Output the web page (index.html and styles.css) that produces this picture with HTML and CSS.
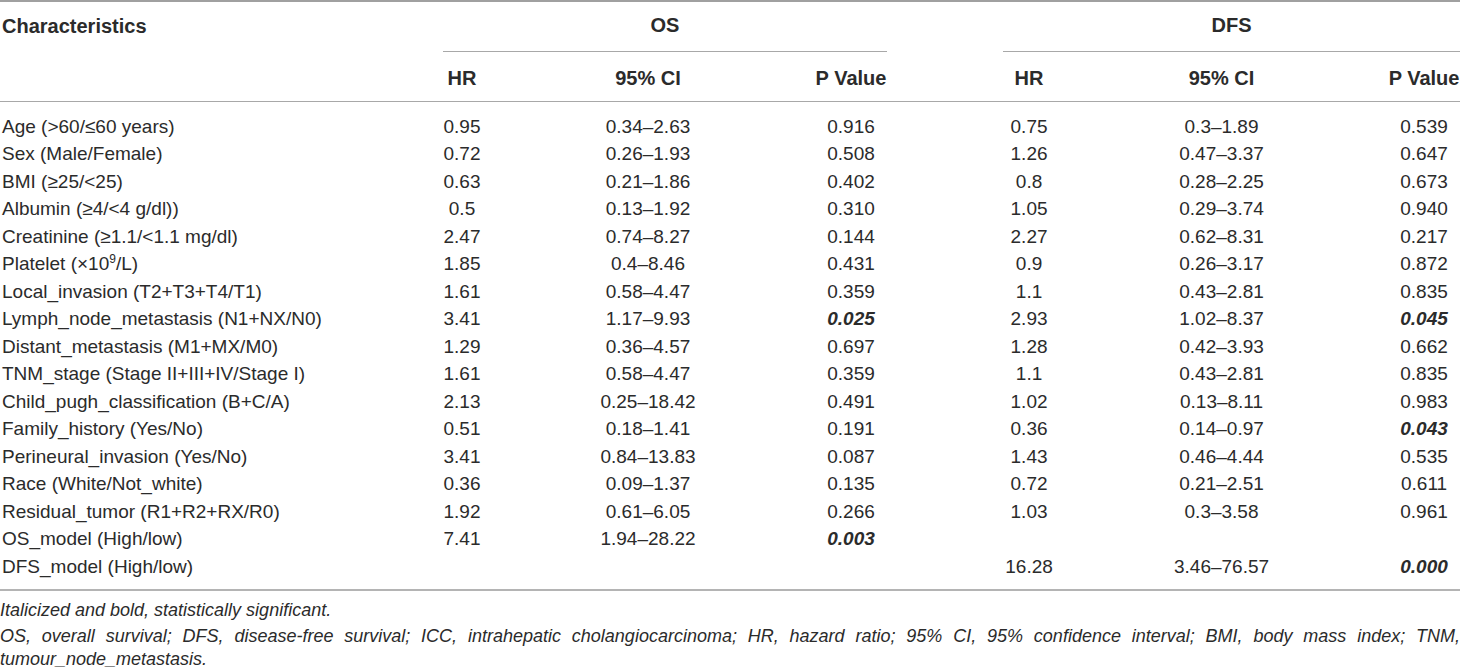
FILE: index.html
```html
<!DOCTYPE html>
<html>
<head>
<meta charset="utf-8">
<link rel="stylesheet" href="styles.css">
</head>
<body>
<table class="tbl">
  <colgroup>
    <col class="c-char"><col class="c-hr1"><col class="c-ci1"><col class="c-p1">
    <col class="c-gap"><col class="c-hr2"><col class="c-ci2"><col class="c-p2">
  </colgroup>
  <thead>
    <tr class="h1">
      <th class="left">Characteristics</th>
      <th colspan="3" class="grp">OS</th>
      <th></th>
      <th colspan="3" class="grp">DFS</th>
    </tr>
    <tr class="h2">
      <th></th>
      <th>HR</th><th>95% CI</th><th>P Value</th>
      <th></th>
      <th>HR</th><th>95% CI</th><th>P Value</th>
    </tr>
  </thead>
  <tbody>
    <tr class="first"><td class="left">Age (&gt;60/≤60 years)</td><td>0.95</td><td>0.34–2.63</td><td>0.916</td><td></td><td>0.75</td><td>0.3–1.89</td><td>0.539</td></tr>
    <tr><td class="left">Sex (Male/Female)</td><td>0.72</td><td>0.26–1.93</td><td>0.508</td><td></td><td>1.26</td><td>0.47–3.37</td><td>0.647</td></tr>
    <tr><td class="left">BMI (≥25/&lt;25)</td><td>0.63</td><td>0.21–1.86</td><td>0.402</td><td></td><td>0.8</td><td>0.28–2.25</td><td>0.673</td></tr>
    <tr><td class="left">Albumin (≥4/&lt;4 g/dl))</td><td>0.5</td><td>0.13–1.92</td><td>0.310</td><td></td><td>1.05</td><td>0.29–3.74</td><td>0.940</td></tr>
    <tr><td class="left">Creatinine (≥1.1/&lt;1.1 mg/dl)</td><td>2.47</td><td>0.74–8.27</td><td>0.144</td><td></td><td>2.27</td><td>0.62–8.31</td><td>0.217</td></tr>
    <tr><td class="left">Platelet (×10<sup>9</sup>/L)</td><td>1.85</td><td>0.4–8.46</td><td>0.431</td><td></td><td>0.9</td><td>0.26–3.17</td><td>0.872</td></tr>
    <tr><td class="left">Local_invasion (T2+T3+T4/T1)</td><td>1.61</td><td>0.58–4.47</td><td>0.359</td><td></td><td>1.1</td><td>0.43–2.81</td><td>0.835</td></tr>
    <tr><td class="left">Lymph_node_metastasis (N1+NX/N0)</td><td>3.41</td><td>1.17–9.93</td><td class="sig">0.025</td><td></td><td>2.93</td><td>1.02–8.37</td><td class="sig">0.045</td></tr>
    <tr><td class="left">Distant_metastasis (M1+MX/M0)</td><td>1.29</td><td>0.36–4.57</td><td>0.697</td><td></td><td>1.28</td><td>0.42–3.93</td><td>0.662</td></tr>
    <tr><td class="left">TNM_stage (Stage II+III+IV/Stage I)</td><td>1.61</td><td>0.58–4.47</td><td>0.359</td><td></td><td>1.1</td><td>0.43–2.81</td><td>0.835</td></tr>
    <tr><td class="left">Child_pugh_classification (B+C/A)</td><td>2.13</td><td>0.25–18.42</td><td>0.491</td><td></td><td>1.02</td><td>0.13–8.11</td><td>0.983</td></tr>
    <tr><td class="left">Family_history (Yes/No)</td><td>0.51</td><td>0.18–1.41</td><td>0.191</td><td></td><td>0.36</td><td>0.14–0.97</td><td class="sig">0.043</td></tr>
    <tr><td class="left">Perineural_invasion (Yes/No)</td><td>3.41</td><td>0.84–13.83</td><td>0.087</td><td></td><td>1.43</td><td>0.46–4.44</td><td>0.535</td></tr>
    <tr><td class="left">Race (White/Not_white)</td><td>0.36</td><td>0.09–1.37</td><td>0.135</td><td></td><td>0.72</td><td>0.21–2.51</td><td>0.611</td></tr>
    <tr><td class="left">Residual_tumor (R1+R2+RX/R0)</td><td>1.92</td><td>0.61–6.05</td><td>0.266</td><td></td><td>1.03</td><td>0.3–3.58</td><td>0.961</td></tr>
    <tr><td class="left">OS_model (High/low)</td><td>7.41</td><td>1.94–28.22</td><td class="sig">0.003</td><td></td><td></td><td></td><td></td></tr>
    <tr class="last"><td class="left">DFS_model (High/low)</td><td></td><td></td><td></td><td></td><td>16.28</td><td>3.46–76.57</td><td class="sig">0.000</td></tr>
  </tbody>
</table>
<div class="notes">
  <p class="note">Italicized and bold, statistically significant.</p>
  <p class="note first-line">OS, overall survival; DFS, disease-free survival; ICC, intrahepatic cholangiocarcinoma; HR, hazard ratio; 95% CI, 95% confidence interval; BMI, body mass index; TNM,</p>
  <p class="note cont">tumour_node_metastasis.</p>
</div>
</body>
</html>
```
FILE: styles.css
```css
html, body {
  margin: 0;
  padding: 0;
  background: #fff;
}
body {
  font-family: "Liberation Sans", Arial, sans-serif;
  color: #2b2b2b;
  width: 1460px;
  overflow: hidden;
}
.tbl {
  width: 1460px;
  border-collapse: collapse;
  table-layout: fixed;
  font-size: 19px;
}
.c-char { width: 443px; }
.c-hr1 { width: 38px; }
.c-ci1 { width: 334px; }
.c-p1 { width: 72px; }
.c-gap { width: 116px; }
.c-hr2 { width: 52px; }
.c-ci2 { width: 333px; }
.c-p2 { width: 72px; }

.tbl th, .tbl td {
  padding: 0;
  text-align: center;
  white-space: nowrap;
  overflow: visible;
}
.tbl .left {
  text-align: left;
  padding-left: 2px;
}
.tbl thead th {
  font-size: 20px;
  font-weight: bold;
  line-height: 24px;
}
.tbl thead tr.h1 {
  height: 50px;
  border-top: 2px solid #a0a0a0;
}
.tbl thead tr.h1 th {
  padding-bottom: 2px;
}
.tbl thead th.grp {
  border-bottom: 1px solid #a8a8a8;
}
.tbl thead tr.h2 {
  height: 50px;
  border-bottom: 1px solid #a8a8a8;
}
.tbl thead tr.h2 th {
  padding-top: 3px;
}
.tbl tbody td {
  line-height: 27.5px;
  height: 27.5px;
  vertical-align: top;
}
.tbl tbody tr.first td {
  padding-top: 11px;
}
.tbl tbody tr.last td {
  padding-bottom: 9px;
}
.tbl tbody {
  border-bottom: 2px solid #b4b4b4;
}
.tbl td.sig {
  font-weight: bold;
  font-style: italic;
}
sup {
  font-size: 12px;
  line-height: 0;
  vertical-align: 7px;
}
.notes {
  padding-top: 8px;
}
.note {
  margin: 0;
  font-style: italic;
  font-size: 18px;
  line-height: 23px;
  white-space: nowrap;
}
.first-line {
  margin-top: 3px;
  white-space: normal;
  text-align: justify;
  text-align-last: justify;
}
```
